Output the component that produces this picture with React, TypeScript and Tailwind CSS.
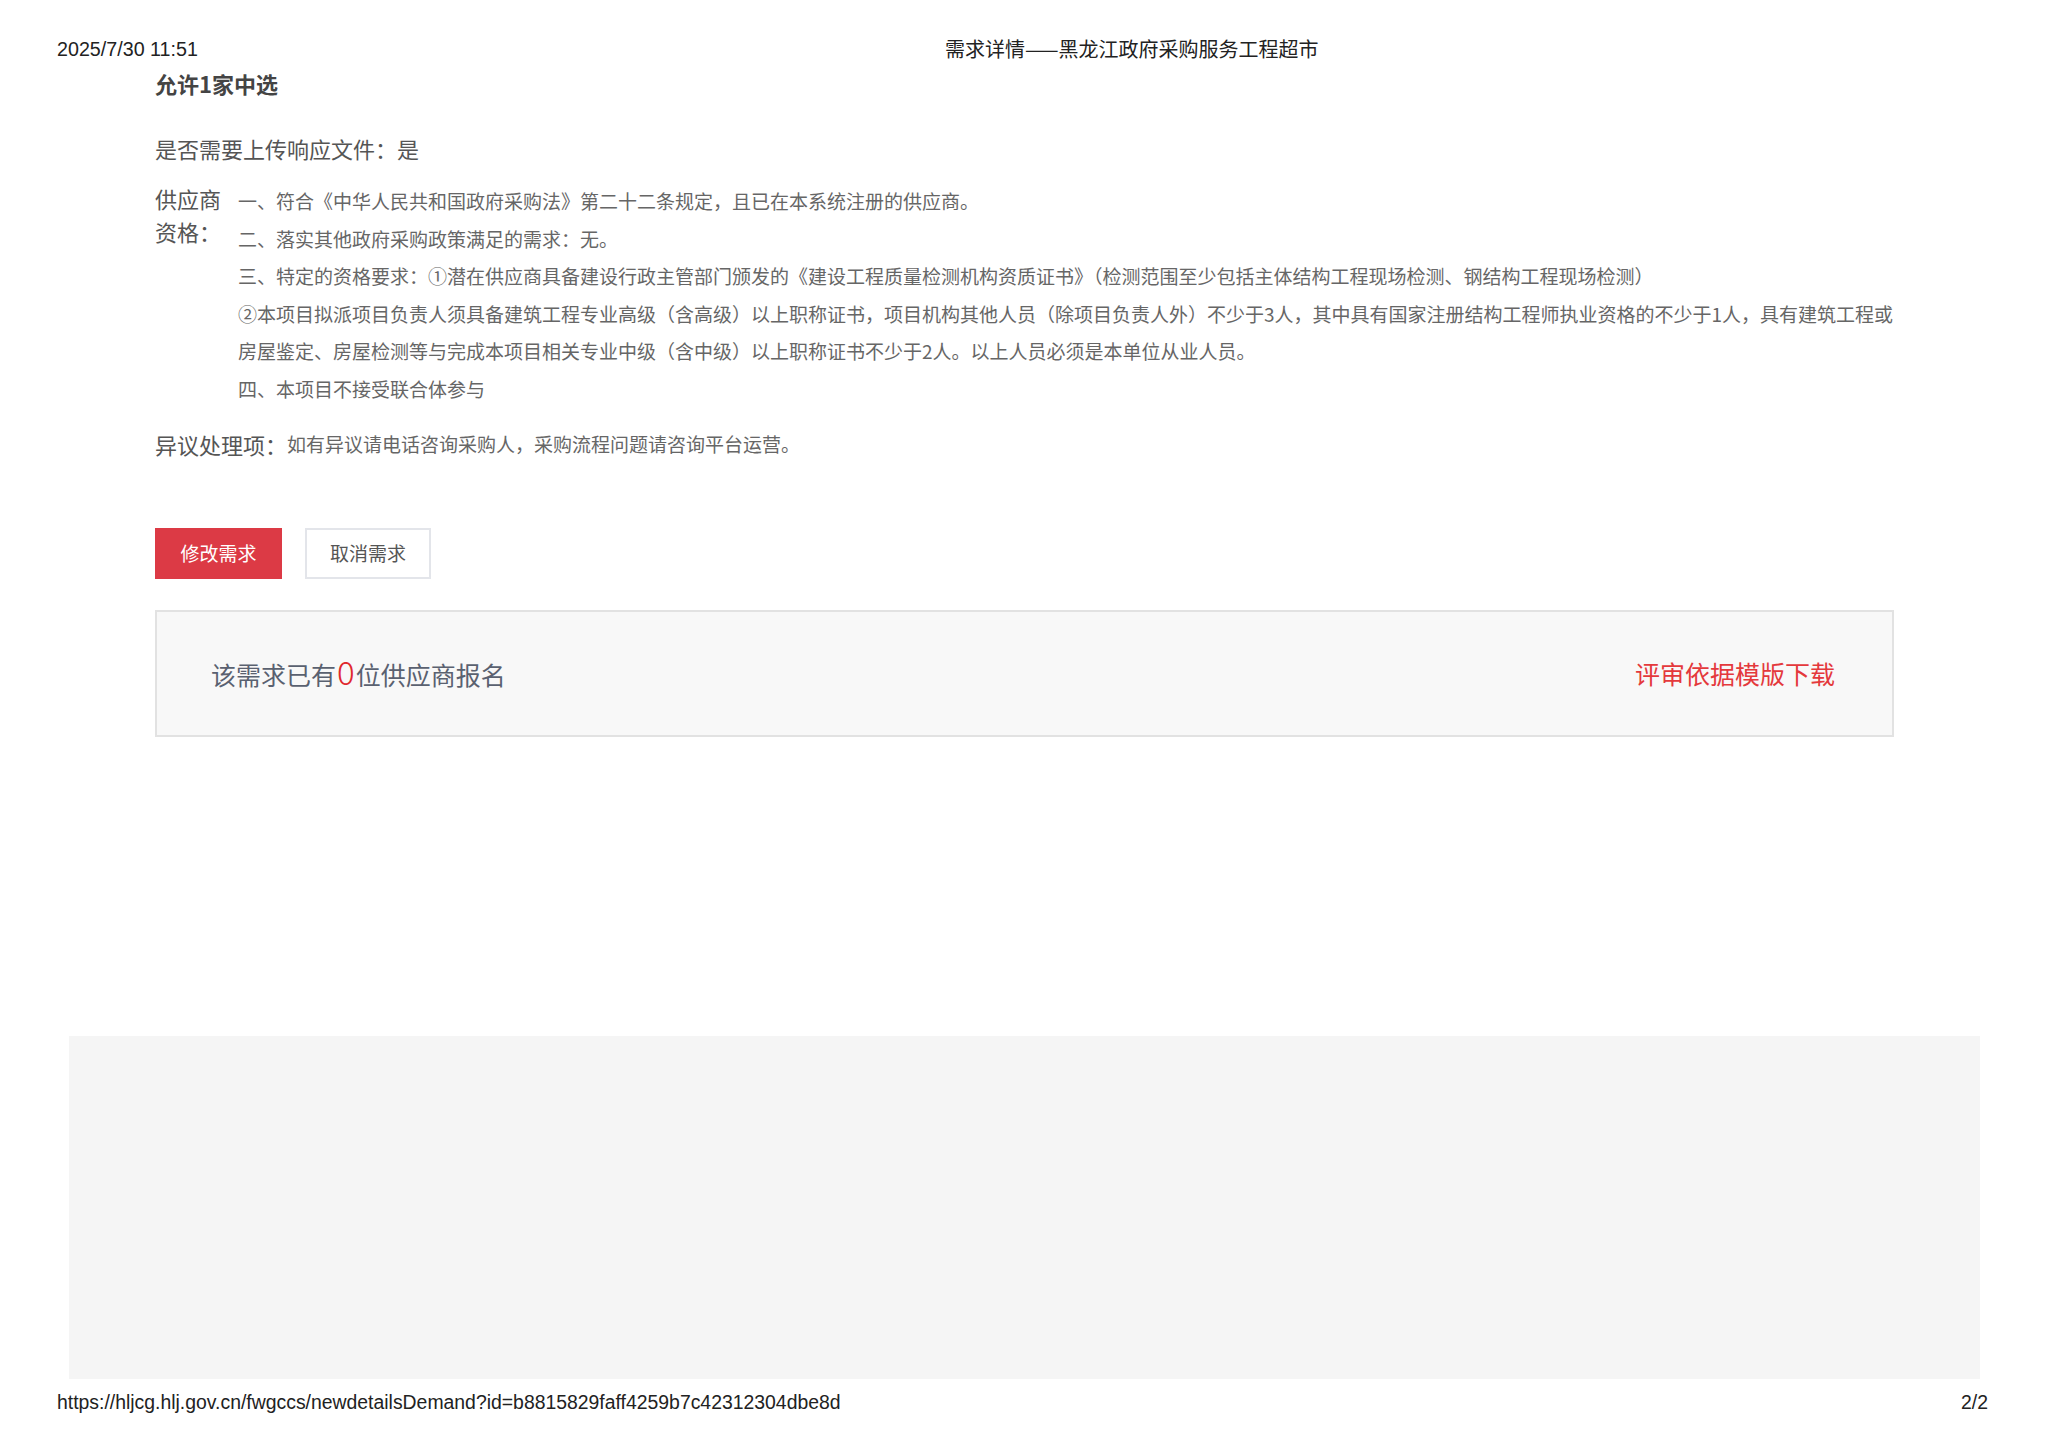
import React from "react";

const cjk = { fontFamily: '"Noto Sans CJK SC", "Noto Sans", sans-serif' };
const latin = { fontFamily: '"Liberation Sans", Arial, "Noto Sans CJK SC", sans-serif' };

const quals = [
  "一、符合《中华人民共和国政府采购法》第二十二条规定，且已在本系统注册的供应商。",
  "二、落实其他政府采购政策满足的需求：无。",
  "三、特定的资格要求：①潜在供应商具备建设行政主管部门颁发的《建设工程质量检测机构资质证书》（检测范围至少包括主体结构工程现场检测、钢结构工程现场检测）",
  "②本项目拟派项目负责人须具备建筑工程专业高级（含高级）以上职称证书，项目机构其他人员（除项目负责人外）不少于3人，其中具有国家注册结构工程师执业资格的不少于1人，具有建筑工程或",
  "房屋鉴定、房屋检测等与完成本项目相关专业中级（含中级）以上职称证书不少于2人。以上人员必须是本单位从业人员。",
  "四、本项目不接受联合体参与",
];

function PrintHeader() {
  return (
    <div className="flex items-center pt-[37px] px-[57px] h-[61px] leading-[24px] text-[#222]">
      <span style={latin} className="w-[888px] shrink-0 text-[19.7px]">
        2025/7/30 11:51
      </span>
      <span style={cjk} className="text-[20px]">
        需求详情——黑龙江政府采购服务工程超市
      </span>
    </div>
  );
}

function DemandDetail() {
  return (
    <div style={cjk} className="pl-[155px] pr-[154px]">
      <div className="mt-[7px] text-[22px] leading-[30px] font-bold text-[#444]">允许1家中选</div>

      <div className="mt-[35px] text-[22px] leading-[30px] text-[#555]">是否需要上传响应文件：是</div>

      <div className="mt-[19px] flex">
        <div className="w-[83px] shrink-0 text-[22px] leading-[33px] text-[#555]">
          供应商
          <br />
          资格：
        </div>
        <div className="flex-1 text-[19px] leading-[37.6px] text-[#666]">
          {quals.map((q) => (
            <div key={q} className="whitespace-nowrap">
              {q}
            </div>
          ))}
        </div>
      </div>

      <div className="mt-[22px] flex items-center h-[30px]">
        <span className="text-[22px] text-[#555]">异议处理项：</span>
        <span className="text-[19px] text-[#666]">如有异议请电话咨询采购人，采购流程问题请咨询平台运营。</span>
      </div>

      <div className="mt-[68px] flex gap-[23px]">
        <button className="w-[127px] h-[51px] bg-[#dc3a45] text-white text-[19px]">修改需求</button>
        <button className="w-[126px] h-[51px] border-2 border-[#e3e5ea] bg-white text-[#555] text-[19px]">
          取消需求
        </button>
      </div>

      <div className="mt-[31px] h-[127px] border-2 border-[#e2e2e2] bg-[#f8f8f8] flex items-center justify-between pl-[54px] pr-[57px] pt-[2px]">
        <div className="flex items-baseline text-[25px] text-[#5a6170]">
          该需求已有<span className="text-[33px] leading-none font-light text-[#e0282e] px-[1px]">0</span>位供应商报名
        </div>
        <span className="text-[25px] text-[#e4393c]">评审依据模版下载</span>
      </div>
    </div>
  );
}

export default function App() {
  return (
    <div className="w-[2048px] min-h-[1447px] bg-white flex flex-col">
      <PrintHeader />
      <DemandDetail />
      <div className="flex-1" />
      <div className="mx-[69px] w-[1911px] h-[343px] bg-[#f5f5f5]" />
      <div style={latin} className="mt-[12px] mb-[34px] pl-[57px] pr-[60px] flex justify-between text-[19.4px] leading-[22px] text-[#222]">
        <span>https://hljcg.hlj.gov.cn/fwgccs/newdetailsDemand?id=b8815829faff4259b7c42312304dbe8d</span>
        <span>2/2</span>
      </div>
    </div>
  );
}
